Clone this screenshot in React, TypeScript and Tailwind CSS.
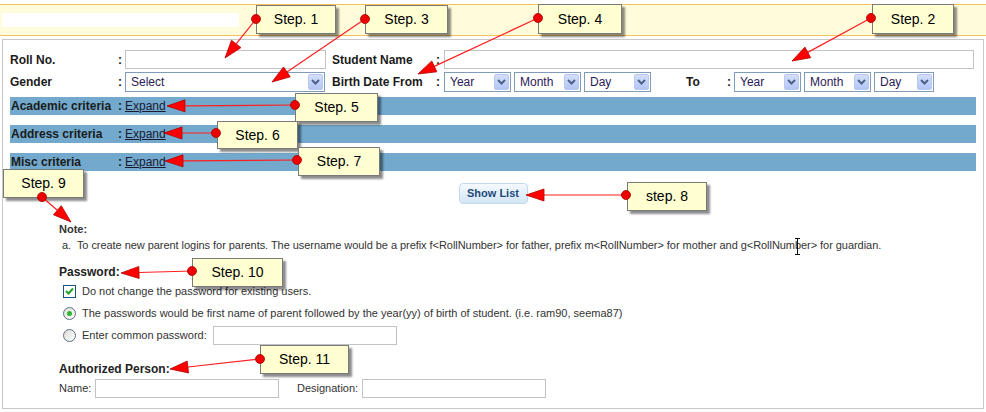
import React from "react";

type Callout = {
  label: string;
  x: number;
  y: number;
  w: number;
  h: number;
  dot: [number, number];
  tip: [number, number];
};

const CALLOUTS: Callout[] = [
  { label: "Step. 1", x: 256, y: 5, w: 80, h: 29, dot: [256, 19], tip: [225, 58] },
  { label: "Step. 3", x: 365, y: 5, w: 83, h: 29, dot: [365, 19], tip: [272, 82] },
  { label: "Step. 4", x: 538, y: 4, w: 84, h: 30, dot: [538, 18], tip: [418, 74] },
  { label: "Step. 2", x: 872, y: 4, w: 82, h: 30, dot: [871, 18], tip: [792, 61] },
  { label: "Step. 5", x: 295, y: 93, w: 83, h: 29, dot: [295, 105], tip: [167, 106] },
  { label: "Step. 6", x: 217, y: 121, w: 81, h: 28, dot: [216, 133], tip: [164, 133] },
  { label: "Step. 7", x: 298, y: 147, w: 82, h: 29, dot: [297, 160], tip: [165, 161] },
  { label: "Step. 9", x: 3, y: 169, w: 81, h: 29, dot: [42, 197], tip: [71, 222] },
  { label: "step. 8", x: 627, y: 182, w: 80, h: 29, dot: [626, 195], tip: [526, 195] },
  { label: "Step. 10", x: 192, y: 258, w: 91, h: 29, dot: [192, 271], tip: [121, 273] },
  { label: "Step. 11", x: 260, y: 345, w: 89, h: 29, dot: [260, 359], tip: [170, 369] },
];

const Chevron = () => (
  <div className="mr-[1px] flex h-[16px] w-[15px] items-center justify-center rounded-[2px] border border-[#b8c8f2] bg-gradient-to-b from-[#d2defb] to-[#b4c6f6]">
    <svg width="9" height="6" viewBox="0 0 9 6">
      <path d="M1 1 L4.5 4.5 L8 1" fill="none" stroke="#4d6185" strokeWidth="2" />
    </svg>
  </div>
);

const Select = ({ text, w }: { text: string; w: string }) => (
  <div className={`flex h-[20px] items-center justify-between border border-[#7f9db9] bg-white pl-[5px] text-[12px] text-[#2a1a55] ${w}`}>
    <span>{text}</span>
    <Chevron />
  </div>
);

const Label = ({ children, w }: { children: React.ReactNode; w: string }) => (
  <div className={`text-[12px] font-bold text-[#1a1a1a] ${w}`}>{children}</div>
);

const Colon = ({ w }: { w: string }) => (
  <div className={`text-[12px] font-bold text-[#1a1a1a] ${w}`}>:</div>
);

const CriteriaBar = ({ label, className }: { label: string; className: string }) => (
  <div className={`flex h-[18px] items-center bg-[#72a9cc] text-[12px] text-[#1b1b1b] ${className}`}>
    <div className="w-[108px] pl-[1px] font-bold">{label}</div>
    <div className="w-[7px] font-bold">:</div>
    <a className="text-[#1a1a33] underline">Expand</a>
  </div>
);

const Radio = ({ checked }: { checked?: boolean }) => (
  <div className="flex h-[13px] w-[13px] items-center justify-center rounded-full border border-[#5a6f87] bg-gradient-to-br from-[#dcdcd6] to-white">
    {checked && <div className="h-[5px] w-[5px] rounded-full bg-[#2fb52f]" />}
  </div>
);

function Overlay() {
  return (
    <svg className="pointer-events-none absolute left-0 top-0" width="986" height="412">
      {CALLOUTS.map((c) => {
        const [x1, y1] = c.dot;
        const [x2, y2] = c.tip;
        const dx = x2 - x1;
        const dy = y2 - y1;
        const len = Math.hypot(dx, dy);
        const ux = dx / len;
        const uy = dy / len;
        const bx = x2 - ux * 18;
        const by = y2 - uy * 18;
        const nx = -uy * 6;
        const ny = ux * 6;
        const pts = `${x2},${y2} ${bx + nx},${by + ny} ${bx - nx},${by - ny}`;
        return (
          <g key={c.label}>
            <line x1={x1} y1={y1} x2={bx} y2={by} stroke="#ff1f1f" strokeWidth="1.2" />
            <polygon points={pts} fill="#ff0000" stroke="#b00000" strokeWidth="0.8" />
            <circle cx={x1} cy={y1} r="4.5" fill="#ee0000" stroke="#a00000" strokeWidth="0.8" />
          </g>
        );
      })}
      {/* text cursor */}
      <g stroke="#111" strokeWidth="1">
        <line x1="797.5" y1="239" x2="797.5" y2="254" />
        <line x1="795" y1="238.5" x2="800" y2="238.5" />
        <line x1="795" y1="254.5" x2="800" y2="254.5" />
      </g>
    </svg>
  );
}

export default function App() {
  return (
    <div className="relative h-[412px] w-[986px] overflow-hidden bg-white font-['Liberation_Sans',Arial,sans-serif]">
      <div className="pt-[4px]">
        <div className="h-[32px] border-y border-[#f7c25a] bg-[#fffcdc] pt-[8px]">
          <div className="ml-[2px] h-[14px] w-[237px] bg-white" />
        </div>
      </div>

      <div className="mx-[2px] mt-[3px] h-[370px] border border-[#c8c8c8] pl-[7px] pr-[7px] pt-[10px]">
        <div className="flex h-[19px] items-center">
          <Label w="w-[108px]">Roll No.</Label>
          <Colon w="w-[7px]" />
          <div className="h-[19px] w-[201px] border border-[#c3c3c3]" />
          <Label w="ml-[6px] w-[104px]">Student Name</Label>
          <Colon w="w-[8px]" />
          <div className="mr-[2px] h-[19px] flex-1 border border-[#c3c3c3]" />
        </div>

        <div className="mt-[3px] flex h-[20px] items-center">
          <Label w="w-[108px]">Gender</Label>
          <Colon w="w-[7px]" />
          <Select text="Select" w="w-[200px]" />
          <Label w="ml-[7px] w-[104px]">Birth Date From</Label>
          <Colon w="w-[8px]" />
          <Select text="Year" w="w-[67px]" />
          <Select text="Month" w="ml-[3px] w-[67px]" />
          <Select text="Day" w="ml-[3px] w-[67px]" />
          <Label w="ml-[35px] w-[41px]">To</Label>
          <Colon w="w-[7px]" />
          <Select text="Year" w="w-[67px]" />
          <Select text="Month" w="ml-[3px] w-[67px]" />
          <Select text="Day" w="ml-[3px] w-[60px]" />
        </div>

        <CriteriaBar label="Academic criteria" className="mt-[5px]" />
        <CriteriaBar label="Address criteria" className="mt-[10px]" />
        <CriteriaBar label="Misc criteria" className="mt-[10px]" />

        <div className="mt-[12px] flex justify-center">
          <button
            type="button"
            className="h-[21px] w-[69px] rounded-[4px] border border-[#c4d8ea] bg-gradient-to-b from-[#f4f9ff] to-[#d3e6f7] text-[11px] font-bold text-[#1f4a7a]"
          >
            Show List
          </button>
        </div>

        <div className="mt-[18px] pl-[49px] text-[11px] text-[#333]">
          <div className="h-[14px] font-bold leading-[14px]">Note:</div>
          <div className="mt-[2px] h-[14px] whitespace-pre pl-[3px] leading-[14px] tracking-[-0.05px]">
            {"a.  To create new parent logins for parents. The username would be a prefix f<RollNumber> for father, prefix m<RollNumber> for mother and g<RollNumber> for guardian."}
          </div>

          <div className="mt-[13px] h-[15px] text-[12px] font-bold leading-[15px] text-[#222]">Password:</div>

          <div className="mt-[4px] flex h-[14px] items-center pl-[4px]">
            <div className="flex h-[13px] w-[13px] items-center justify-center border border-[#1c5180] bg-white">
              <svg width="9" height="8" viewBox="0 0 9 8">
                <path d="M1 4 L3.5 6.5 L8 1.5" fill="none" stroke="#21a121" strokeWidth="2" />
              </svg>
            </div>
            <span className="ml-[6px]">Do not change the password for existing users.</span>
          </div>

          <div className="mt-[8px] flex h-[14px] items-center pl-[4px]">
            <Radio checked />
            <span className="ml-[6px]">
              The passwords would be first name of parent followed by the year(yy) of birth of student. (i.e. ram90, seema87)
            </span>
          </div>

          <div className="mt-[6px] flex h-[19px] items-center pl-[4px]">
            <Radio />
            <span className="ml-[6px]">Enter common password:</span>
            <div className="ml-[6px] h-[19px] w-[184px] border border-[#c3c3c3]" />
          </div>

          <div className="mt-[17px] h-[15px] text-[12px] font-bold leading-[15px] text-[#222]">Authorized Person:</div>

          <div className="mt-[2px] flex h-[19px] items-center">
            <span className="w-[36px]">Name:</span>
            <div className="h-[19px] w-[184px] border border-[#c3c3c3]" />
            <span className="ml-[18px] w-[65px]">Designation:</span>
            <div className="h-[19px] w-[184px] border border-[#c3c3c3]" />
          </div>
        </div>
      </div>

      {CALLOUTS.map((c) => (
        <div
          key={c.label}
          className="absolute flex items-center justify-center border border-[#7a7a7a] bg-[#ffffd2] text-[14px] text-black shadow-[3px_3px_2px_rgba(0,0,0,0.45)]"
          style={{ left: c.x, top: c.y, width: c.w, height: c.h }}
        >
          {c.label}
        </div>
      ))}
      <Overlay />
    </div>
  );
}
